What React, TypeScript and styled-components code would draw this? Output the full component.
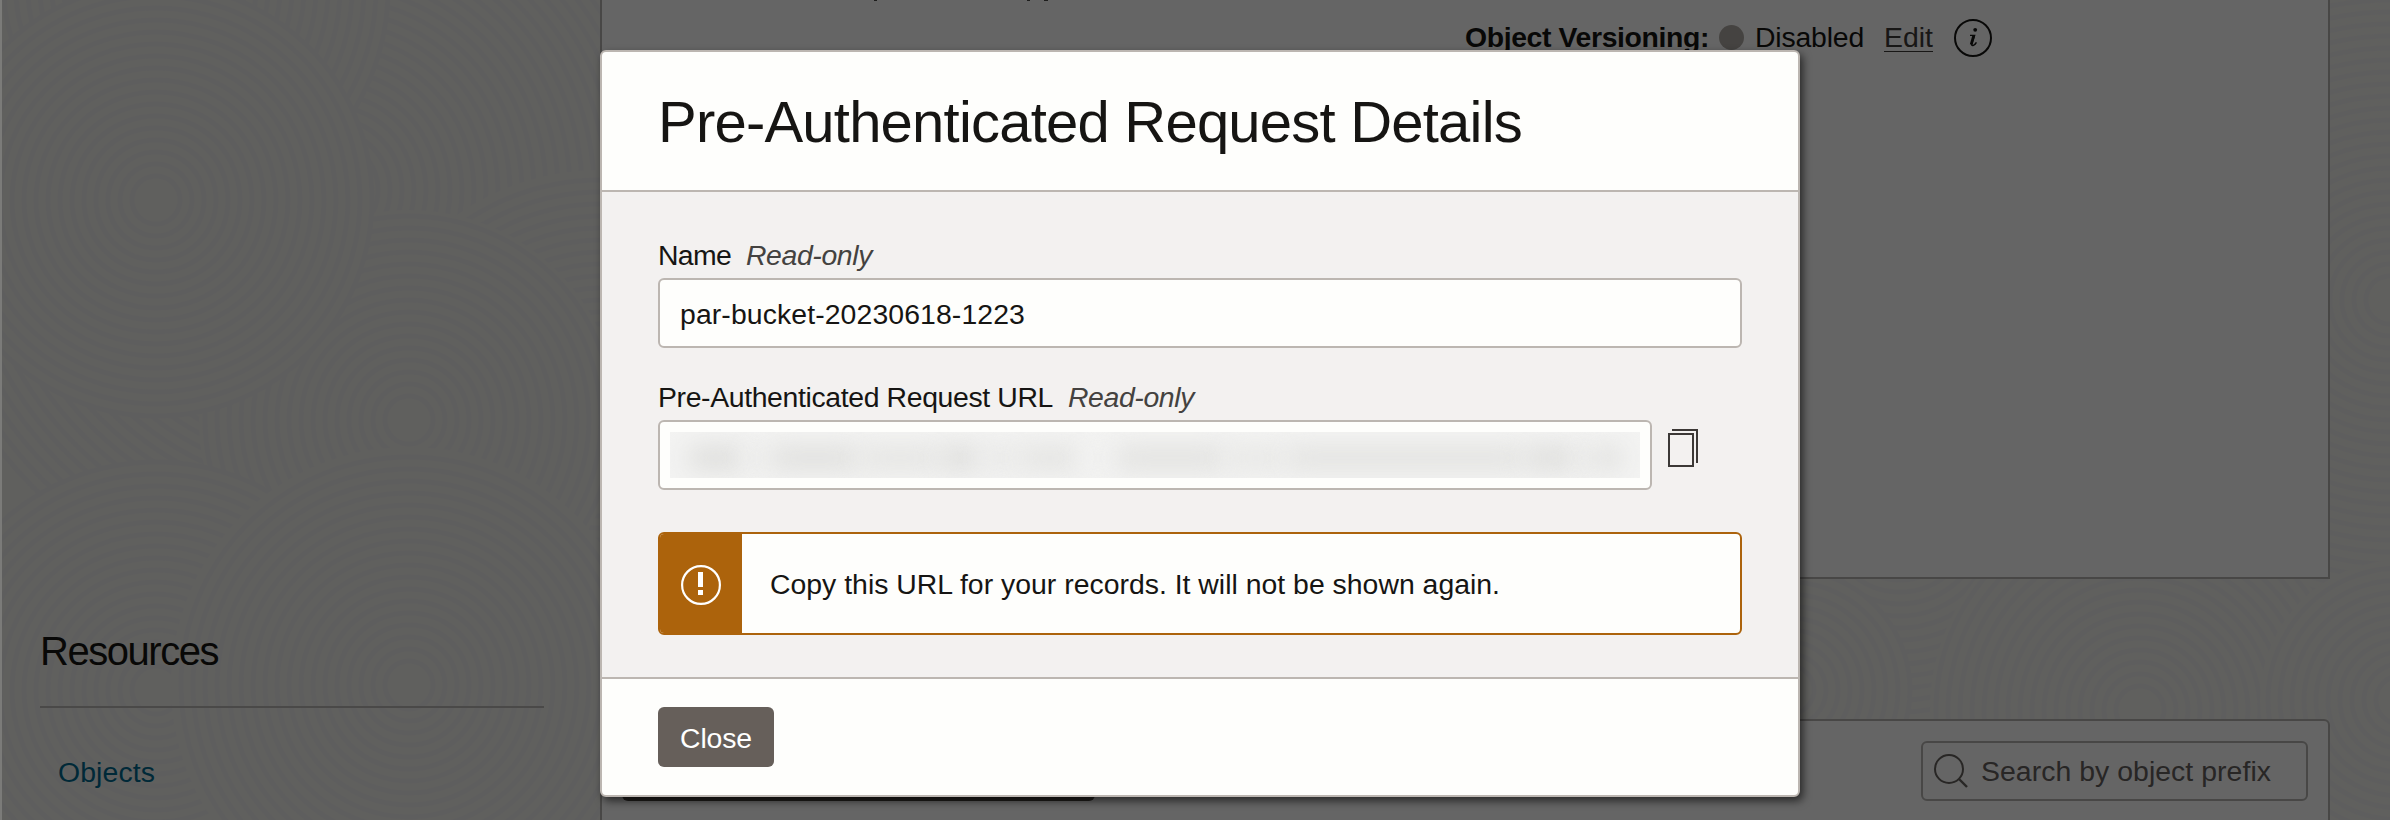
import React, { useLayoutEffect, useRef, useState } from 'react';
import styled, { createGlobalStyle } from 'styled-components';

const Global = createGlobalStyle`
  *{box-sizing:border-box}
  html,body{margin:0;height:820px;overflow:hidden;background:#efefeb}
  body{font-family:"Liberation Sans",Arial,sans-serif;font-size:28.4px;color:#161513}
  p,h1,h2{margin:0;font-weight:400}
`;

const Page = styled.div`position:relative;width:2390px;height:820px;overflow:hidden;display:flex;background:#efefeb;`;
const Pattern = styled.svg`position:absolute;inset:0;`;
const Sidebar = styled.aside`position:relative;width:600px;padding:624px 56px 0 40px;display:flex;flex-direction:column;`;
const SideTitle = styled.h2`height:84px;font-size:40px;line-height:55px;border-bottom:2px solid #b9b7b3;white-space:nowrap;`;
const SideLink = styled.a`margin:46px 0 0 18px;line-height:36px;color:#00688c;`;
const Main = styled.main`position:relative;width:1730px;display:flex;flex-direction:column;gap:140px;`;
const Details = styled.section`flex:none;height:579px;border:2px solid #b4b2ae;border-top:0;background:#fcfcfc;display:flex;padding:19px 0 0 863px;`;
const Descenders = styled.svg`position:absolute;left:274px;top:0;`;
const Versioning = styled.div`display:flex;align-items:center;height:38px;white-space:nowrap;`;
const VersionText = styled.span<{ $bold?: boolean }>`font-weight:${p => (p.$bold ? 700 : 400)};padding-bottom:2px;`;
const Dot = styled.i`width:25px;height:25px;border-radius:50%;background:#ada8a2;margin:-2px 11px 0 10px;`;
const Edit = styled.a`margin:0 21px 0 20px;color:#3c3a38;box-shadow:0 1px 0 #3c3a38;line-height:24px;height:26px;`;
const Objects = styled.section`flex:none;height:110px;border:2px solid #b4b2ae;border-radius:6px 6px 0 0;background:#fcfcfc;display:flex;justify-content:space-between;align-items:flex-start;padding:20px 20px 0;`;
const Bulk = styled.div`width:473px;height:60px;border-radius:6px;background:#524c48;`;
const Search = styled.div`width:387px;height:60px;border:2px solid #b4b2ae;border-radius:6px;display:flex;align-items:center;padding-left:10px;gap:12px;color:#64605c;`;
const Overlay = styled.div`position:absolute;inset:0 0 0 2px;background:rgba(0,0,0,.6);`;
const EdgeLine = styled.div`position:absolute;inset:0 auto 0 0;width:2px;background:#7b7b79;`;

const Dialog = styled.div`position:absolute;left:600px;top:50px;width:1200px;height:747px;border:2px solid #bcb6b1;border-radius:6px;background:#fefefc;box-shadow:3px 4px 8px rgba(0,0,0,.6);`;
const Header = styled.header`height:140px;padding:38px 56px 0;border-bottom:2px solid #bcb6b1;border-radius:4px 4px 0 0;`;
const Title = styled.h1`font-size:58px;line-height:64px;white-space:nowrap;`;
const Body = styled.div`height:487px;padding:46px 56px 0;background:#f3f1f0;border-bottom:2px solid #bcb6b1;`;
const Label = styled.div`height:40px;line-height:34px;display:flex;gap:15px;white-space:nowrap;`;
const ReadOnly = styled.em`color:#444240;`;
const Field = styled.div<{ $w: number }>`width:${p => p.$w}px;height:70px;border:2px solid #bcb6b1;border-radius:6px;background:#fefefc;display:flex;align-items:center;padding:2px 10px 0 20px;`;
const Row = styled.div`display:flex;margin-bottom:42px;gap:16px;`;
const FieldGroup = styled.div`margin-bottom:32px;`;
const Redacted = styled.div`width:970px;height:46px;margin:-2px 0 0 -10px;flex:none;overflow:hidden;background:#f3f3f2;display:flex;align-items:center;padding:6px 18px 0;`;
const Smudge = styled.i<{ $w: number; $c: string }>`width:${p => p.$w}px;height:24px;border-radius:10px;background:${p => p.$c};filter:blur(12px);flex:none;`;
const Alert = styled.div`width:1084px;height:103px;border:2px solid #ac630c;border-radius:6px;background:#fefefc;display:flex;overflow:hidden;`;
const AlertMark = styled.div`width:82px;background:#ac630c;display:flex;align-items:center;justify-content:center;padding-top:2px;`;
const AlertText = styled.p`padding-left:28px;line-height:103px;margin-top:-1px;`;
const Footer = styled.footer`padding:28px 56px;`;
const Close = styled.button`display:block;width:116px;height:60px;padding:2px 0 0;border:0;border-radius:6px;background:#665f5a;color:#fff;font:inherit;`;
const FitBox = styled.span`display:inline-block;white-space:nowrap;`;

/* Spreads a line of text over the given width by letter spacing. */
function Fit({ w, children }: { w: number; children: string }) {
  const ref = useRef<HTMLSpanElement>(null);
  const [ls, setLs] = useState(0);
  useLayoutEffect(() => {
    if (ref.current) setLs((w - ref.current.getBoundingClientRect().width) / children.length);
  }, []);
  return <FitBox ref={ref} style={{ letterSpacing: ls }}>{children}</FitBox>;
}

/* Overlapping ripples, drawn back to front: x, y, radius. */
const discs = [
  [330, 190, 420], [20, -60, 250], [600, 420, 250], [409, 420, 210], [160, -10, 230],
  [156, 690, 230], [156, 200, 218], [409, 685, 238],
  [1900, 520, 300], [2390, 300, 330], [2140, 710, 210], [2400, 700, 140], [1790, 690, 120],
];

function Waves() {
  return (
    <Pattern width="2390" height="820">
      {discs.map(([x, y, r]) => (
        <g key={`${x},${y}`} fill="none" stroke="#ececeb" strokeWidth="5">
          <circle cx={x} cy={y} r={r} fill="#f0efeb" stroke="none" />
          {Array.from({ length: Math.floor(r / 12) - 1 }, (_, i) => <circle key={i} cx={x} cy={y} r={(i + 2) * 12} />)}
        </g>
      ))}
    </Pattern>
  );
}

const smudges: [number, string][] = [
  [56, '#dededc'], [26, '#ededec'], [90, '#e0e0de'], [80, '#e5e5e3'], [40, '#dededc'], [40, '#e9e9e8'], [60, '#e4e4e2'],
  [36, '#f1f1f0'], [110, '#e2e2e0'], [60, '#e8e8e6'], [240, '#e3e3e1'], [50, '#dededc'], [18, '#e9e9e8'], [28, '#e0e0de'],
];

export default function App() {
  return (
    <>
      <Global />
      <Page>
        <Waves />
        <Sidebar>
          <SideTitle><Fit w={178}>Resources</Fit></SideTitle>
          <SideLink><Fit w={97}>Objects</Fit></SideLink>
        </Sidebar>
        <Main>
          <Details>
            <Descenders width="176" height="1" fill="#4a4947"><path d="M0 0h3v1H0zM153 0h3v1h-3zM170 0h4v1h-4z" /></Descenders>
            <Versioning>
              <VersionText $bold><Fit w={244}>Object Versioning:</Fit></VersionText>
              <Dot />
              <VersionText><Fit w={109}>Disabled</Fit></VersionText>
              <Edit><Fit w={49}>Edit</Fit></Edit>
              <svg width="38" height="38" viewBox="0 0 38 38" fill="none" stroke="#161513">
                <circle cx="19" cy="19" r="18" strokeWidth="2" />
                <circle cx="21.2" cy="10.8" r="1.9" fill="#161513" stroke="none" />
                <path d="M16 16.4H20.6L17.8 24.6Q17.2 27.2 19.4 26.4Q21.4 25.4 22.4 23.4" strokeWidth="1.4" />
                <path d="M19.8 16.4L17.2 25.6" strokeWidth="2.8" />
              </svg>
            </Versioning>
          </Details>
          <Objects>
            <Bulk />
            <Search>
              <svg width="36" height="38" viewBox="0 0 36 38" fill="none" stroke="#64605c" strokeWidth="2">
                <circle cx="16" cy="17" r="14" /><path d="M26 27l8 8" strokeWidth="2.4" />
              </svg>
              <Fit w={290}>Search by object prefix</Fit>
            </Search>
          </Objects>
        </Main>
        <Overlay />
        <EdgeLine />
        <Dialog>
          <Header><Title><Fit w={864}>Pre-Authenticated Request Details</Fit></Title></Header>
          <Body>
            <FieldGroup>
              <Label><Fit w={73}>Name</Fit><ReadOnly><Fit w={126}>Read-only</Fit></ReadOnly></Label>
              <Field $w={1084}><Fit w={345}>par-bucket-20230618-1223</Fit></Field>
            </FieldGroup>
            <Label><Fit w={395}>Pre-Authenticated Request URL</Fit><ReadOnly><Fit w={126}>Read-only</Fit></ReadOnly></Label>
            <Row>
              <Field $w={994}>
                <Redacted>{smudges.map(([w, c], i) => <Smudge key={i} $w={w} $c={c} />)}</Redacted>
              </Field>
              <svg width="30" height="48" viewBox="0 -9 30 48" fill="none" stroke="#3c3836" strokeWidth="2">
                <path d="M1 5H25V37H1ZM4 1H29V34" />
              </svg>
            </Row>
            <Alert>
              <AlertMark>
                <svg width="40" height="40" viewBox="0 0 40 40" fill="#fff">
                  <circle cx="20" cy="20" r="18.9" fill="none" stroke="#fff" strokeWidth="2.2" />
                  <path d="M17 7h5v15h-5zM17 25h5v5h-5z" />
                </svg>
              </AlertMark>
              <AlertText><Fit w={730}>Copy this URL for your records. It will not be shown again.</Fit></AlertText>
            </Alert>
          </Body>
          <Footer><Close><Fit w={72}>Close</Fit></Close></Footer>
        </Dialog>
      </Page>
    </>
  );
}
